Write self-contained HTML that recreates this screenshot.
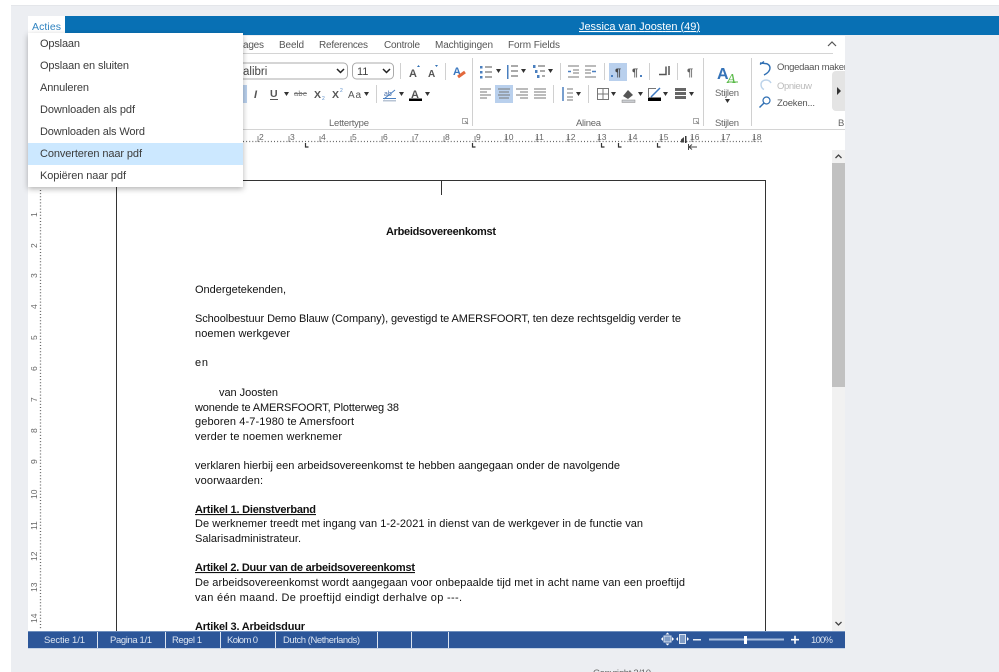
<!DOCTYPE html>
<html><head><meta charset="utf-8"><style>
html,body{margin:0;padding:0;width:999px;height:672px;overflow:hidden;background:#fff}
svg{display:block;font-family:"Liberation Sans",sans-serif}
.m{font-size:11px;fill:#3b3b3b}
.t{font-size:10px;fill:#555}
.d{font-size:11px;fill:#111}
.b{font-weight:bold}
.s{font-size:9.5px;fill:#dbe4f1}
.r{font-size:8.5px;fill:#666}
.l{font-size:9.5px;fill:#666}
.ar{fill:#333}
</style></head><body>
<svg width="999" height="672" viewBox="0 0 999 672" xmlns="http://www.w3.org/2000/svg">
<defs>
<filter id="sh" x="-10%" y="-10%" width="120%" height="125%"><feDropShadow dx="0" dy="2" stdDeviation="3" flood-color="#000" flood-opacity=".3"/></filter>
<clipPath id="docclip"><rect x="28" y="150" width="804" height="481"/></clipPath>
<clipPath id="ribclip"><rect x="28" y="36" width="817" height="114"/></clipPath>
<path id="v" d="M0 0h5l-2.500 4z"/>
</defs>

<rect x="11" y="5" width="988" height="667" fill="#eceef2"/>
<rect x="11" y="5" width="988" height="1" fill="#e4e6ea"/>
<rect x="65" y="16" width="934" height="19" fill="#0870b4"/>
<rect x="28" y="16" width="37" height="18" fill="#fff"/>
<text x="32" y="30" font-size="10.500" fill="#2f83c0" textLength="29">Acties</text>
<text x="579" y="30" font-size="11" fill="#fff" textLength="121" text-decoration="underline">Jessica van Joosten (49)</text>

<rect x="28" y="36" width="817" height="595" fill="#fff"/>

<g clip-path="url(#ribclip)">
<rect x="28" y="53" width="805" height="1" fill="#d4d4d4"/>
<rect x="28" y="129" width="817" height="1" fill="#d4d4d4"/>
<g class="t">
<text x="243" y="48" textLength="21">ages</text>
<text x="279" y="48" textLength="25">Beeld</text>
<text x="319" y="48" textLength="49">References</text>
<text x="384" y="48" textLength="36">Controle</text>
<text x="435" y="48" textLength="58">Machtigingen</text>
<text x="508" y="48" textLength="52">Form Fields</text>
</g>
<path d="M828 46l4-4 4 4" fill="none" stroke="#555" stroke-width="1.200"/>

<rect x="215" y="63" width="132.500" height="16" rx="4" fill="#fff" stroke="#ababab"/>
<text x="243" y="75" font-size="11.500" fill="#444">alibri</text>
<path d="M337 69l3.500 3.500 3.500-3.500" fill="none" stroke="#222" stroke-width="1.500"/>
<rect x="352.500" y="63" width="41" height="16" rx="4" fill="#fff" stroke="#ababab"/>
<text x="357" y="75" font-size="11" fill="#444">11</text>
<path d="M383 69l3.500 3.500 3.500-3.500" fill="none" stroke="#222" stroke-width="1.500"/>
<rect x="400" y="63" width="1" height="16" fill="#d0d0d0"/>
<text x="409" y="77" font-size="11" fill="#555" font-weight="bold">A</text>
<path d="M417 67l1.500-2 1.500 2z" fill="#2f6fb3"/>
<text x="428" y="77" font-size="10" fill="#555" font-weight="bold">A</text>
<path d="M435 65l1.500 2 1.500-2z" fill="#2f6fb3"/>
<rect x="445" y="63" width="1" height="17" fill="#d0d0d0"/>
<text x="453" y="75" font-size="11" fill="#3b78c0" font-weight="bold">A</text>
<path d="M458 77l7-5" stroke="#e2683c" stroke-width="3"/>

<rect x="243" y="85" width="4" height="18" fill="#b9d0ed"/>
<text x="254" y="98" font-size="11" fill="#555" font-style="italic" font-weight="bold">I</text>
<text x="270" y="97" font-size="10.500" fill="#555" font-weight="bold">U</text>
<rect x="270" y="99" width="8" height="1" fill="#555"/>
<use href="#v" x="284" y="92" class="ar"/>
<text x="294" y="96" font-size="7.500" fill="#777" textLength="13">abe</text>
<rect x="294" y="93" width="13" height="1" fill="#777"/>
<text x="314" y="98" font-size="10.500" fill="#555" font-weight="bold">X</text>
<text x="322" y="100" font-size="5" fill="#5b8fca">2</text>
<text x="332" y="98" font-size="10.500" fill="#555" font-weight="bold">X</text>
<text x="340" y="92" font-size="5" fill="#5b8fca">2</text>
<text x="348" y="98" font-size="10" fill="#555" textLength="13">Aa</text>
<use href="#v" x="364" y="92" class="ar"/>
<rect x="376" y="85" width="1" height="18" fill="#d0d0d0"/>
<text x="384" y="96" font-size="7" fill="#4a6fa8">ab</text>
<path d="M384 99l11-9" stroke="#4a7fc0" stroke-width="1"/>
<rect x="383" y="98" width="13" height="1" fill="#4a7fc0"/><rect x="383" y="100" width="13" height="1.500" fill="#b8c4d4"/>
<use href="#v" x="399" y="92" class="ar"/>
<text x="411" y="98" font-size="11" fill="#555" font-weight="bold">A</text>
<rect x="409" y="98.500" width="13" height="2.500" fill="#000"/>
<use href="#v" x="425" y="92" class="ar"/>
<text x="329" y="126" class="l" textLength="40">Lettertype</text>
<rect x="462.500" y="118.500" width="5" height="5" fill="none" stroke="#aaa"/>
<path d="M465 121l3 3" stroke="#888"/>
<rect x="472" y="58" width="1" height="68" fill="#d0d0d0"/>

<g fill="#4a7fbf">
<rect x="480" y="66" width="2.500" height="2.500"/><rect x="480" y="71" width="2.500" height="2.500"/><rect x="480" y="76" width="2.500" height="2.500"/>
<rect x="507" y="65" width="1.500" height="14"/>
<rect x="533" y="65" width="2.500" height="3"/><rect x="535" y="70" width="2.500" height="3"/><rect x="537" y="75" width="2.500" height="3"/>
</g>
<path d="M485 67h7M485 72h7M485 77h7M511 66h7M511 71h7M511 76h7M538 66h7M540 71h5M542 76h3" stroke="#777" stroke-width="1.200"/>
<use href="#v" x="496" y="69" class="ar"/><use href="#v" x="521" y="69" class="ar"/><use href="#v" x="548" y="69" class="ar"/>
<rect x="560" y="63" width="1" height="17" fill="#d0d0d0"/>
<path d="M568 66h11M573 70h6M573 73h6M568 77h11M585 66h11M585 70h6M585 73h6M585 77h11" stroke="#777" stroke-width="1.100"/>
<path d="M568 71.500h3M592 71.500h4" stroke="#4a7fbf" stroke-width="1.500"/>
<rect x="604" y="63" width="1" height="17" fill="#d0d0d0"/>
<rect x="609" y="63" width="18" height="18" fill="#b9d0ed"/>
<text x="615" y="76" font-size="11" fill="#444" font-weight="bold">¶</text>
<text x="632" y="76" font-size="11" fill="#555" font-weight="bold">¶</text>
<rect x="640" y="75" width="2" height="2" fill="#4a7fbf"/><rect x="611" y="75" width="2" height="2" fill="#4a7fbf"/>
<rect x="649" y="63" width="1" height="17" fill="#d0d0d0"/>
<path d="M659 74.500h7v-8M669 66v9" stroke="#555" stroke-width="1.500" fill="none"/>
<rect x="677" y="63" width="1" height="17" fill="#d0d0d0"/>
<text x="687" y="76" font-size="11" fill="#666" font-weight="bold">¶</text>

<rect x="495" y="85" width="18" height="18" fill="#b9d0ed"/>
<path d="M480 89h11M480 92h7M480 95h11M480 98h7M498 89h12M499 92h10M498 95h12M499 98h10M516 89h12M520 92h8M516 95h12M520 98h8M534 89h12M534 92h12M534 95h12M534 98h12" stroke="#777" stroke-width="1.100"/>
<rect x="553" y="85" width="1" height="18" fill="#d0d0d0"/>
<path d="M563 87v14" stroke="#4a7fbf" stroke-width="1.500"/>
<path d="M567 89h6M567 93h6M567 97h6M567 100h6" stroke="#777"/>
<use href="#v" x="576" y="92" class="ar"/>
<rect x="588" y="85" width="1" height="18" fill="#d0d0d0"/>
<path d="M597.500 88.500h11v11h-11zM603 88.500v11M597.500 94h11" fill="none" stroke="#777"/>
<use href="#v" x="611" y="92" class="ar"/>
<path d="M623 96l5-6 5 5-5 4z" fill="#555"/><rect x="622" y="100" width="13" height="2.500" fill="#c9ccd1" stroke="#888" stroke-width=".5"/>
<use href="#v" x="638" y="92" class="ar"/>
<path d="M648 88.500h8M648.500 88v9" stroke="#777" fill="none"/>
<path d="M651 97l9-9" stroke="#3b78c0" stroke-width="1.500"/>
<rect x="648" y="97.500" width="13" height="3.500" fill="#000"/>
<use href="#v" x="663" y="92" class="ar"/>
<rect x="675" y="88" width="11" height="3" fill="#666"/><rect x="675" y="92" width="11" height="3" fill="#666"/><rect x="675" y="96" width="11" height="3" fill="#666"/>
<use href="#v" x="689" y="92" class="ar"/>
<text x="576" y="126" class="l" textLength="25">Alinea</text>
<rect x="693.500" y="118.500" width="5" height="5" fill="none" stroke="#aaa"/>
<path d="M696 121l3 3" stroke="#888"/>
<rect x="703" y="58" width="1" height="68" fill="#d0d0d0"/>

<text x="717" y="79" font-size="16" fill="#3573b8" font-weight="bold">A</text>
<text x="727" y="83" font-size="14" fill="#58b947" font-style="italic" font-family="Liberation Serif">A</text>
<rect x="727" y="81.500" width="11" height="1" fill="#58b947"/>
<text x="715" y="96" class="l" textLength="24">Stijlen</text>
<use href="#v" x="725" y="99" class="ar"/>
<text x="715" y="126" class="l" textLength="24">Stijlen</text>
<rect x="751" y="58" width="1" height="68" fill="#d0d0d0"/>

<path d="M760 64.500l4-3M760 63l5 .5c3 0 5 2 5 4.500 0 3-2 5-6 7" fill="none" stroke="#2f6fb3" stroke-width="1.400"/>
<path d="M771 83c-1-2-3-3-5-3-3 0-5 2-5 4.500 0 2 1 4 3 5" fill="none" stroke="#bcd3ea" stroke-width="1.400"/>
<circle cx="766.500" cy="100.500" r="3.500" fill="none" stroke="#2f6fb3" stroke-width="1.200"/>
<path d="M764 103l-4.500 4.500" stroke="#2f6fb3" stroke-width="1.500"/>
<text x="777" y="70" font-size="9.500" fill="#555" textLength="72">Ongedaan maken</text>
<text x="777" y="89" font-size="9.500" fill="#bbb" textLength="35">Opnieuw</text>
<text x="777" y="106" font-size="9.500" fill="#555" textLength="38">Zoeken...</text>
<rect x="832" y="71" width="20" height="40" rx="4" fill="#e4e4e4"/>
<path d="M837 87l4 4-4 4z" fill="#333"/>
<text x="838" y="126" class="l">B</text>

<!-- horizontal ruler -->
<path d="M243 141.500H762" stroke="#666" stroke-width="1.300" stroke-dasharray="1 2.100"/>
<path d="M260 136v6M291 136v6M322 136v6M353 136v6M384 136v6M415 136v6M446 136v6M477 136v6M508 136v6M539 136v6M570 136v6M601 136v6M632 136v6M663 136v6M694 136v6M725 136v6M756 136v6" stroke="#888" stroke-width="1" transform="translate(-2 0)"/>
<g class="r">
<text x="259" y="140">2</text><text x="290" y="140">3</text><text x="321" y="140">4</text><text x="352" y="140">5</text><text x="383" y="140">6</text><text x="414" y="140">7</text><text x="445" y="140">8</text><text x="476" y="140">9</text><text x="504" y="140">10</text><text x="535" y="140">11</text><text x="566" y="140">12</text><text x="597" y="140">13</text><text x="628" y="140">14</text><text x="659" y="140">15</text><text x="690" y="140">16</text><text x="721" y="140">17</text><text x="752" y="140">18</text>
</g>
<path d="M305.500 143v4h3M472.500 143v4h3M601.500 143v4h3M618.500 143v4h3M657.500 143v4h3" fill="none" stroke="#333" stroke-width="1.200"/>
<path d="M684 137l-3 2.500v3h3z" fill="#444"/><rect x="685" y="136" width="1.500" height="7" fill="#333"/>
<path d="M689 147h8M692 144.500l-3 2.500 3 2.500M688.500 144v6" fill="none" stroke="#444" stroke-width="1"/>
</g>

<!-- document -->
<g clip-path="url(#docclip)">
<rect x="116.500" y="180.500" width="649" height="500" fill="#fff" stroke="#333" stroke-width="1"/>
<rect x="441" y="180" width="1" height="15" fill="#333"/>
<path d="M40.500 190V630" stroke="#666" stroke-width="1.300" stroke-dasharray="1 2.100"/>
<g class="r">
<text transform="translate(37 217) rotate(-90)">1</text>
<text transform="translate(37 248) rotate(-90)">2</text>
<text transform="translate(37 278) rotate(-90)">3</text>
<text transform="translate(37 309) rotate(-90)">4</text>
<text transform="translate(37 340) rotate(-90)">5</text>
<text transform="translate(37 371) rotate(-90)">6</text>
<text transform="translate(37 402) rotate(-90)">7</text>
<text transform="translate(37 433) rotate(-90)">8</text>
<text transform="translate(37 464) rotate(-90)">9</text>
<text transform="translate(37 499) rotate(-90)">10</text>
<text transform="translate(37 530) rotate(-90)">11</text>
<text transform="translate(37 561) rotate(-90)">12</text>
<text transform="translate(37 592) rotate(-90)">13</text>
<text transform="translate(37 623) rotate(-90)">14</text>
</g>
<g class="d">
<text class="b" x="386" y="235" textLength="110">Arbeidsovereenkomst</text>
<text x="195" y="293" textLength="91">Ondergetekenden,</text>
<text x="195" y="322" textLength="486">Schoolbestuur Demo Blauw (Company), gevestigd te AMERSFOORT, ten deze rechtsgeldig verder te</text>
<text x="195" y="337" textLength="95">noemen werkgever</text>
<text x="195" y="366" textLength="13">en</text>
<text x="219" y="396" textLength="59">van Joosten</text>
<text x="195" y="411" textLength="204">wonende te AMERSFOORT, Plotterweg 38</text>
<text x="195" y="425" textLength="159">geboren 4-7-1980 te Amersfoort</text>
<text x="195" y="440" textLength="147">verder te noemen werknemer</text>
<text x="195" y="469" textLength="425">verklaren hierbij een arbeidsovereenkomst te hebben aangegaan onder de navolgende</text>
<text x="195" y="484" textLength="68">voorwaarden:</text>
<text class="b" x="195" y="513" textLength="121" text-decoration="underline">Artikel 1. Dienstverband</text>
<text x="195" y="527" textLength="448">De werknemer treedt met ingang van 1-2-2021 in dienst van de werkgever in de functie van</text>
<text x="195" y="542" textLength="106">Salarisadministrateur.</text>
<text class="b" x="195" y="571" textLength="220" text-decoration="underline">Artikel 2. Duur van de arbeidsovereenkomst</text>
<text x="195" y="586" textLength="490">De arbeidsovereenkomst wordt aangegaan voor onbepaalde tijd met in acht name van een proeftijd</text>
<text x="195" y="601" textLength="267">van één maand. De proeftijd eindigt derhalve op ---.</text>
<text class="b" x="195" y="630" textLength="110">Artikel 3. Arbeidsduur</text>
</g>
</g>

<!-- scrollbar -->
<rect x="832" y="150" width="13" height="481" fill="#f1f1f1"/>
<rect x="832" y="163" width="13" height="224" fill="#c1c1c1"/>
<path d="M835.500 158l3-3 3 3M835.500 622l3 3 3-3" fill="none" stroke="#444" stroke-width="1.300"/>

<!-- status bar -->
<rect x="28" y="631" width="817" height="17" fill="#2c5699"/>
<rect x="28" y="631" width="817" height="1" fill="#6f8fbd"/>
<rect x="28" y="648" width="817" height="1" fill="#c4d2e6"/>
<path d="M97.500 632v16M165.500 632v16M220.500 632v16M275.500 632v16M377.500 632v16M411.500 632v16M448.500 632v16" stroke="#dbe4f1"/>
<g class="s">
<text x="44" y="643" textLength="41">Sectie 1/1</text>
<text x="110" y="643" textLength="42">Pagina 1/1</text>
<text x="172" y="643" textLength="30">Regel 1</text>
<text x="227" y="643" textLength="31">Kolom 0</text>
<text x="283" y="643" textLength="77">Dutch (Netherlands)</text>
<text x="811" y="643" textLength="22">100%</text>
</g>
<rect x="664" y="636" width="7" height="6" fill="#7f9cc6" stroke="#dbe4f1"/>
<path d="M661 639l2-2v4zM674 639l-2-2v4zM667.500 632.500l-2 2h4zM667.500 645.500l-2-2h4z" fill="#fff"/>
<rect x="679.500" y="634.500" width="6" height="9" fill="#7f9cc6" stroke="#dbe4f1"/>
<path d="M676 639l2-2v4zM689 639l-2-2v4z" fill="#fff"/>
<rect x="693" y="639" width="8" height="1.500" fill="#e6ecf5"/>
<rect x="709" y="638.500" width="75" height="2" fill="#a9bedd"/>
<rect x="744" y="636" width="3" height="8" fill="#fff"/>
<path d="M791 639.700h8M795 635.700v8" stroke="#fff" stroke-width="1.600"/>

<!-- menu -->
<rect x="28" y="33" width="215" height="154" fill="#fff" filter="url(#sh)"/>
<rect x="28" y="143" width="215" height="22" fill="#cce8ff"/>
<g class="m">
<text x="40" y="47" textLength="40">Opslaan</text>
<text x="40" y="69" textLength="89">Opslaan en sluiten</text>
<text x="40" y="91" textLength="49">Annuleren</text>
<text x="40" y="113" textLength="95">Downloaden als pdf</text>
<text x="40" y="135" textLength="105">Downloaden als Word</text>
<text x="40" y="157" textLength="102">Converteren naar pdf</text>
<text x="40" y="179" textLength="86">Kopiëren naar pdf</text>
</g>

<text x="593" y="676" font-size="9.500" fill="#666" textLength="58">Copyright 2/10</text>
</svg>
</body></html>
